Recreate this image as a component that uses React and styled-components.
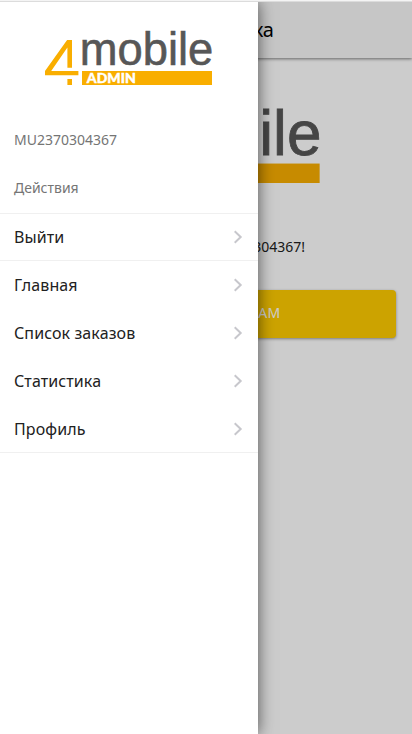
import styled, { createGlobalStyle } from 'styled-components';

const GlobalStyle = createGlobalStyle`
  * {
    box-sizing: border-box;
  }

  body {
    margin: 0;
    overflow: hidden;
    font-family: 'Noto Sans', sans-serif;
    color: #212121;
  }
`;

const Screen = styled.div`
  position: relative;
  height: 734px;
  overflow: hidden;
  background: #fff;
`;

const TopStrip = styled.div`
  position: relative;
  z-index: 1;
  height: 2px;
  background: linear-gradient(#f4f4f4 50%, #dcdcdc 50%);
`;

const Page = styled.div`
  height: 732px;
  background: #fff;
`;

const Header = styled.header`
  display: flex;
  align-items: center;
  height: 56px;
  padding-left: 188px;
  background: #f8f8f8;
  box-shadow: 0 1px 3px rgba(0, 0, 0, 0.5);
`;

const Title = styled.h1`
  width: 86px;
  margin: 0;
  font-size: 20px;
  font-weight: 400;
  line-height: 28px;
  display: flex;
  justify-content: flex-end;
  color: #000;
`;

const Content = styled.main`
  display: flex;
  flex-direction: column;
  align-items: center;
  padding: 50px 16px 0;
`;

const Greeting = styled.p`
  width: 198px;
  display: flex;
  justify-content: flex-end;
  margin: 54px 0 33px;
  font-size: 14px;
  line-height: 20px;
  white-space: nowrap;
`;

const PrimaryButton = styled.button`
  width: 100%;
  height: 48px;
  padding: 0 0 3px;
  border: 0;
  border-radius: 4px;
  background: #ffcc00;
  color: #fff;
  font-family: inherit;
  font-size: 14px;
  letter-spacing: 0.3px;
  box-shadow: 0 1px 3px rgba(0, 0, 0, 0.4);
`;

const Overlay = styled.div`
  position: absolute;
  inset: 2px 0 0;
  background: rgba(0, 0, 0, 0.2);
`;

const Drawer = styled.aside`
  position: absolute;
  top: 2px;
  bottom: 0;
  left: 0;
  width: 258px;
  background: #fff;
  box-shadow: 0 0 15px rgba(0, 0, 0, 0.6);
`;

const Brand = styled.div`
  display: flex;
  justify-content: center;
  height: 114px;
  padding-top: 29px;
`;

const LogoSvg = styled.svg`
  display: block;
  flex: none;
  width: ${({ $width }) => $width}px;
  height: ${({ $height }) => $height}px;
  overflow: visible;
`;

const Caption = styled.div`
  height: 48px;
  padding: 0 14px;
  font-size: 14px;
  line-height: 48px;
  color: #757575;
`;

const Menu = styled.nav`
  display: flex;
  flex-direction: column;
  border-bottom: 1px solid #f0f0f0;

  ${Caption} + & {
    margin-top: 1px;
    box-shadow: inset 0 1px #f0f0f0;
  }
`;

const MenuItem = styled.a`
  display: flex;
  align-items: center;
  justify-content: space-between;
  height: 48px;
  padding: 0 14px;
  font-size: 16px;
  letter-spacing: 0.1px;
  line-height: 24px;

  &:last-child {
    margin-bottom: -1px;
  }
`;

const Arrow = styled.svg`
  width: 12px;
  height: 14px;
`;

function Logo({ width, height }) {
  return (
    <LogoSvg $width={width} $height={height} viewBox="0 0 168 54" preserveAspectRatio="none">
      <path
        d="M22.1 9H27V36.7H22.4V16.4L6.2 40H33.4V44.2H0V40Z M22.4 48H27V54H22.4Z"
        fill="#f9ae00"
      />
      <text
        x="34.8"
        y="33.7"
        fontFamily="Liberation Sans, Arial, sans-serif"
        fontSize="46"
        fill="#575757"
        stroke="#575757"
        strokeWidth="0.6"
        textLength="133.5"
        lengthAdjust="spacingAndGlyphs"
      >
        mobile
      </text>
      <rect x="37" y="40" width="130" height="14" fill="#f9ae00" />
      <text
        x="41.8"
        y="51.7"
        fontFamily="Lato, sans-serif"
        fontWeight="900"
        fontSize="13"
        fill="#fff"
        stroke="#fff"
        strokeWidth="0.4"
        textLength="49"
        lengthAdjust="spacingAndGlyphs"
      >
        ADMIN
      </text>
    </LogoSvg>
  );
}

function MenuGroup({ items }) {
  return (
    <Menu>
      {items.map(item => (
        <MenuItem key={item}>
          {item}
          <Arrow viewBox="0 0 12 14" fill="none" stroke="#c7c7cc" strokeWidth="2">
            <path d="M2.7 1.2L8.7 7L2.7 12.8" />
          </Arrow>
        </MenuItem>
      ))}
    </Menu>
  );
}

function App() {
  return (
    <>
      <GlobalStyle />
      <Screen>
        <TopStrip />
        <Page>
          <Header>
            <Title>Админка</Title>
          </Header>
          <Content>
            <Logo width={230} height={75} />
            <Greeting>Приветствуем, MU2370304367!</Greeting>
            <PrimaryButton>ПЕРЕЙТИ К ЗАКАЗАМ</PrimaryButton>
          </Content>
        </Page>
        <Overlay />
        <Drawer>
          <Brand>
            <Logo width={168} height={54} />
          </Brand>
          <Caption>MU2370304367</Caption>
          <Caption>Действия</Caption>
          <MenuGroup items={['Выйти']} />
          <MenuGroup items={['Главная', 'Список заказов', 'Статистика', 'Профиль']} />
        </Drawer>
      </Screen>
    </>
  );
}

export default App;
